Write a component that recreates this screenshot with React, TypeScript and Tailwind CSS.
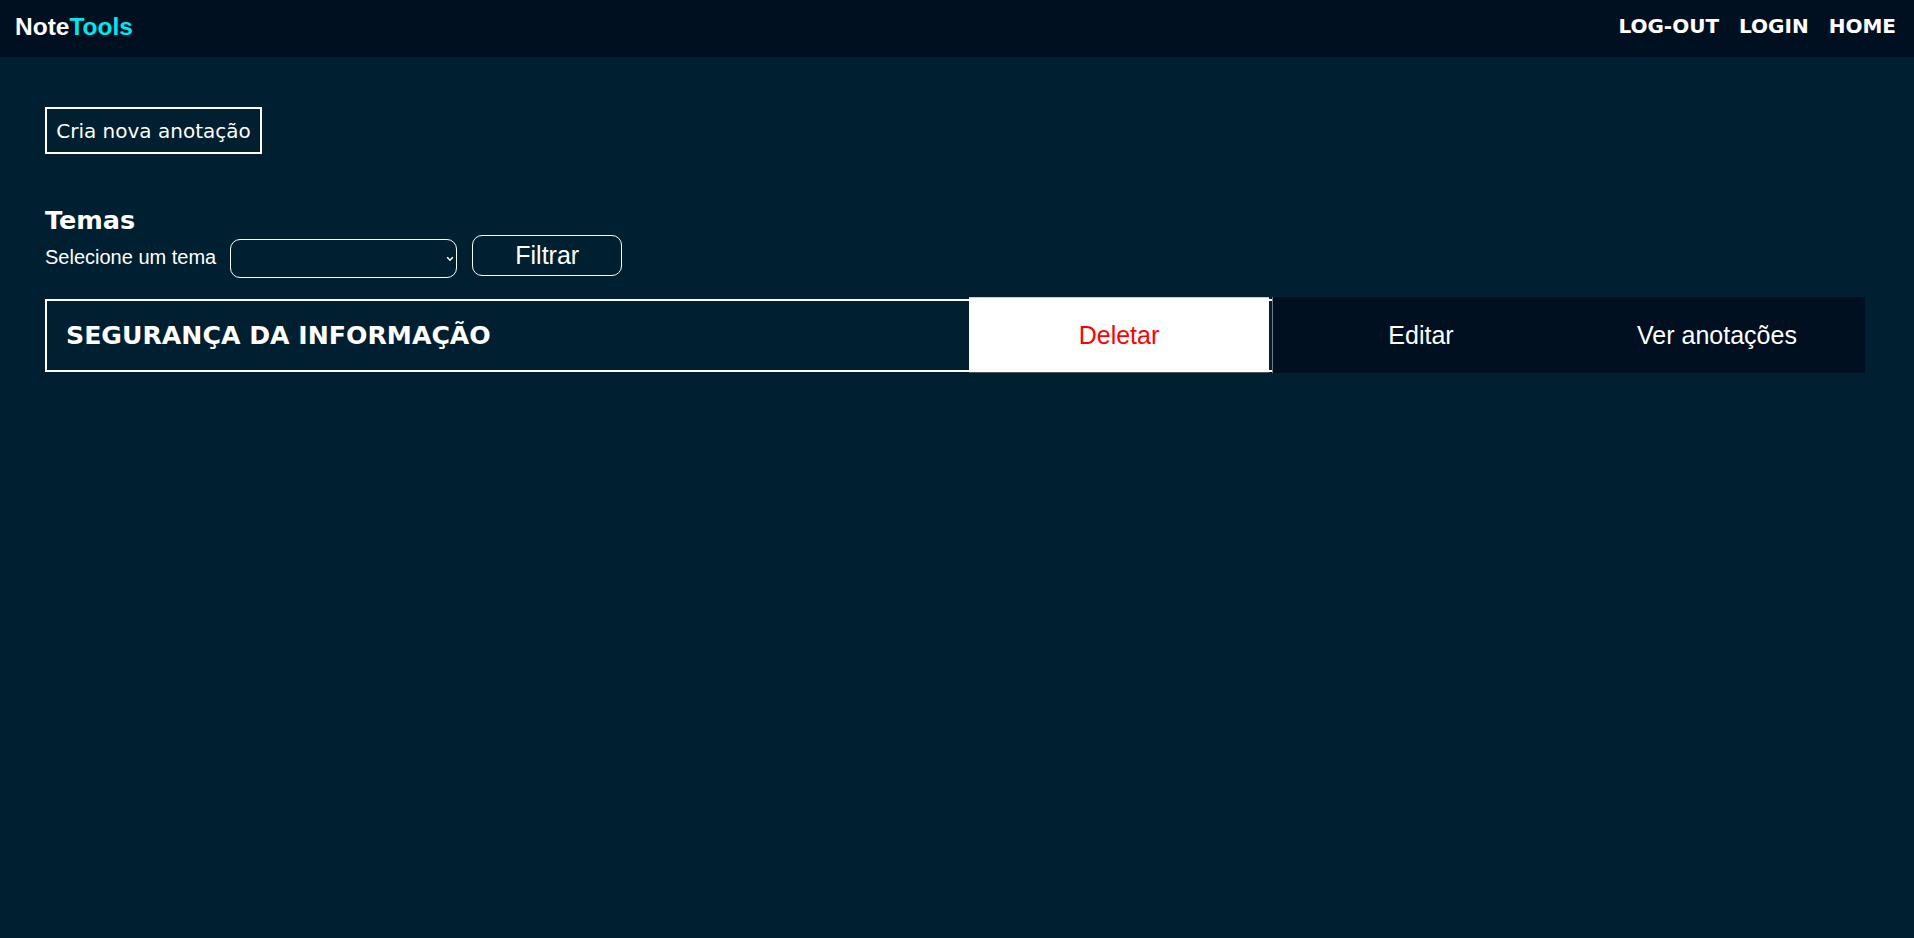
import React from "react";

const arial = "font-['Liberation_Sans',Arial,sans-serif]";
const verdana = "font-['DejaVu_Sans',Verdana,sans-serif]";

const Navbar = () => {
  return (
    <div className="w-full h-[57px] bg-[#001020] flex flex-row items-start justify-between pl-[15px] pr-[18px]">
      <a href="#" className={`${arial} mt-[13px] text-[24.5px] leading-[28px] font-bold text-white`}>
        Note<span className="text-[#00e8ee]">Tools</span>
      </a>
      <div className={`${verdana} mt-[14px] flex flex-row gap-[20px] text-[20px] leading-[24px] font-bold text-white`}>
        <a href="#">LOG-OUT</a>
        <a href="#">LOGIN</a>
        <a href="#">HOME</a>
      </div>
    </div>
  );
};

const TemaRow = ({ nome }: { nome: string }) => {
  return (
    <div className="w-[1820px] flex flex-row items-center">
      <div className="flex-1 h-[73px] border-2 border-r-0 border-white flex items-center pl-[19px] pt-[2px]">
        <span className={`${verdana} text-[25.2px] font-bold text-white`}>{nome}</span>
      </div>
      <button
        className={`${arial} -ml-[303px] mr-[3px] w-[300px] h-[76px] pt-[2px] bg-white text-[#ff0000] text-[25px] border-t border-b border-t-[#c9d0d4] border-b-[#4a565e]`}
      >
        Deletar
      </button>
      <button className={`${arial} w-[297px] h-[76px] pt-[2px] bg-[#001020] text-white text-[25px] border-l border-l-[#6f7c85]`}>
        Editar
      </button>
      <button className={`${arial} w-[296px] h-[76px] pt-[2px] bg-[#001020] text-white text-[25px]`}>
        Ver anotações
      </button>
    </div>
  );
};

export default function App() {
  return (
    <div className="min-h-[938px] w-full bg-[#001f30]">
      <Navbar />
      <div className="pl-[45px] pt-[50px]">
        <button
          className={`${verdana} w-[217px] h-[47px] border-2 border-white text-white text-[20px] flex items-center justify-center`}
        >
          Cria nova anotação
        </button>

        <h2 className={`${verdana} mt-[52px] text-[25.5px] leading-[29px] font-bold text-white`}>Temas</h2>
        <div className="flex flex-row items-start">
          <label className={`${arial} mt-[11px] text-[20px] leading-[23px] text-white`}>Selecione um tema</label>
          <div className="relative ml-[14px] mt-[4px]">
            <select className="appearance-none block w-[227px] h-[39px] rounded-[10px] border border-white bg-transparent text-white"></select>
            <svg
              className="absolute right-[3px] top-[17px] pointer-events-none"
              width="8"
              height="6"
              viewBox="0 0 8 6"
              fill="none"
            >
              <path d="M1.2 1.2 L4 4.2 L6.8 1.2" stroke="white" strokeWidth="1.6" />
            </svg>
          </div>
          <button
            className={`${arial} ml-[15px] w-[150px] h-[41px] rounded-[10px] border border-white text-white text-[25px]`}
          >
            Filtrar
          </button>
        </div>

        <div className="mt-[19px]">
          <TemaRow nome="SEGURANÇA DA INFORMAÇÃO" />
        </div>
      </div>
    </div>
  );
}
